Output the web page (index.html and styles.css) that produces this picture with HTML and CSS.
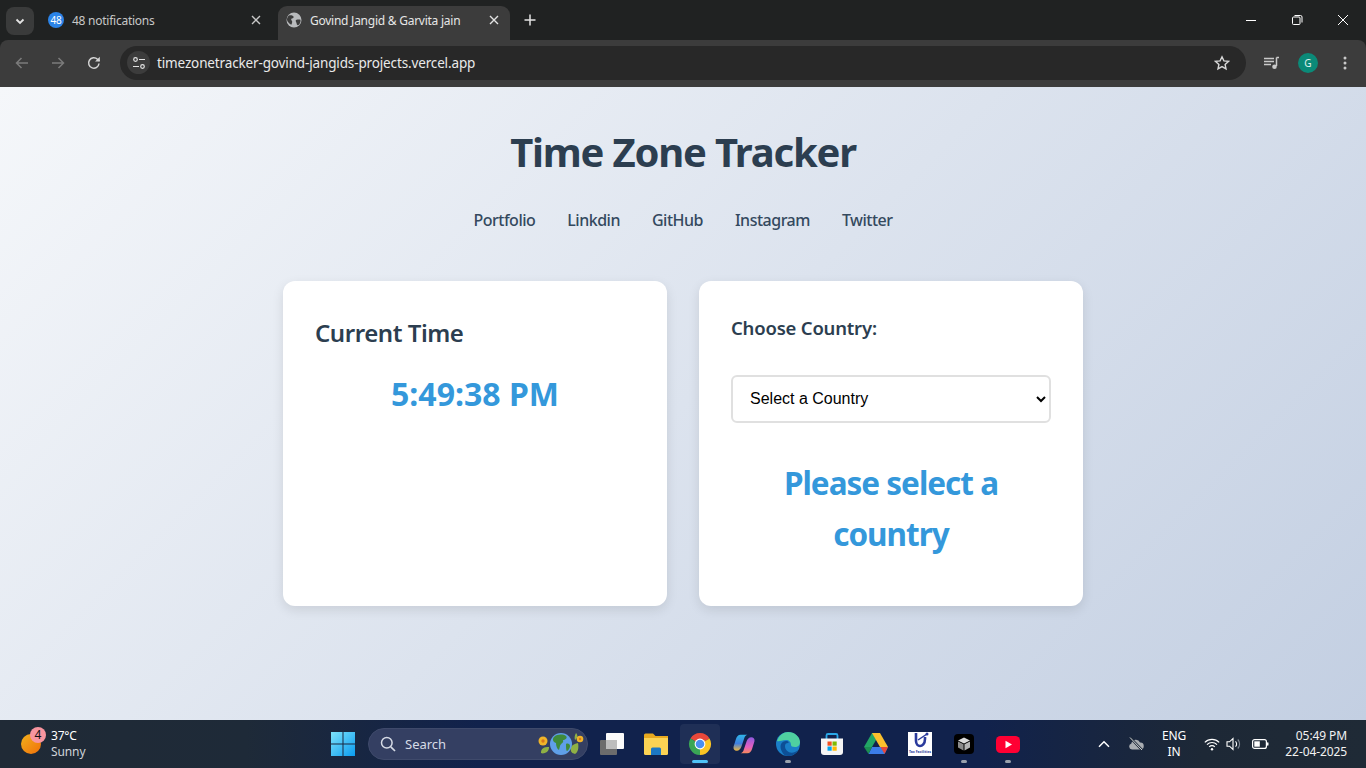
FILE: index.html
```html
<!DOCTYPE html>
<html lang="en">
<head>
    <meta charset="UTF-8">
    <meta name="viewport" content="width=device-width, initial-scale=1.0">
    <title>Time Zone Tracker</title>
    <link rel="stylesheet" href="styles.css">
</head>
<body>
    <!-- browser chrome -->
    <div class="tabstrip">
        <div class="tab-search">
            <svg width="12" height="12" viewBox="0 0 12 12"><path d="M2.5 4.5 6 8l3.5-3.5" fill="none" stroke="#e3e3e3" stroke-width="1.8"/></svg>
        </div>
        <div class="tab">
            <span class="badge-fav">48</span>
            <span class="tab-title">48 notifications</span>
            <svg class="tab-x" width="10" height="10" viewBox="0 0 10 10"><path d="M1 1l8 8M9 1l-8 8" stroke="#c7c7c7" stroke-width="1.4"/></svg>
        </div>
        <div class="tab tab-active">
            <svg width="16" height="16" viewBox="0 0 16 16"><circle cx="8" cy="8" r="7.5" fill="#b9bbbd"/><path d="M3 3.5c2-.6 3.5 0 4.500 1 .8.8-.6 1.800-1.500 2-1.200.3-1 1.500-.2 2.200.9.8.2 2.800-.5 4C3.500 12 1.500 10 1 8c-.2-1.800.8-3.500 2-4.500zM10 8c1.200-.5 3.500-.6 4.500-.3.300 2-.5 4-2 5.300-1 .6-1.800-.4-1.800-1.300C10.700 10.500 9 9 10 8z" fill="#3c3c3c"/></svg>
            <span class="tab-title">Govind Jangid &amp; Garvita jain</span>
            <svg class="tab-x" width="10" height="10" viewBox="0 0 10 10"><path d="M1 1l8 8M9 1l-8 8" stroke="#e3e3e3" stroke-width="1.4"/></svg>
        </div>
        <svg class="new-tab" width="12" height="12" viewBox="0 0 12 12"><path d="M6 .5v11M.5 6h11" stroke="#e3e3e3" stroke-width="1.5"/></svg>
        <div class="win-btns">
            <svg width="12" height="12" viewBox="0 0 12 12"><path d="M1 6.500h10" stroke="#fff" stroke-width="1"/></svg>
            <svg width="12" height="12" viewBox="0 0 12 12"><rect x="1.500" y="3" width="7.500" height="7.500" rx="1" fill="none" stroke="#fff"/><path d="M3.500 1.500H9.500a1.500 1.500 0 0 1 1.500 1.500V8.500" fill="none" stroke="#fff"/></svg>
            <svg width="12" height="12" viewBox="0 0 12 12"><path d="M1 1l10 10M11 1L1 11" stroke="#fff" stroke-width="1"/></svg>
        </div>
    </div>
    <div class="toolbar">
        <svg class="nav-icon" width="16" height="16" viewBox="0 0 16 16"><path d="M14 8H2.500M7.500 3 2.500 8l5 5" fill="none" stroke="#7b7b7b" stroke-width="1.500"/></svg>
        <svg class="nav-icon" width="16" height="16" viewBox="0 0 16 16"><path d="M2 8h11.500M8.500 3l5 5-5 5" fill="none" stroke="#7b7b7b" stroke-width="1.500"/></svg>
        <svg class="nav-icon" width="16" height="16" viewBox="0 0 16 16"><path d="M13 8.500A5.200 5.200 0 1 1 11.500 4.300L13.500 6" fill="none" stroke="#d4d4d4" stroke-width="1.500"/><path d="M13.800 1.800v4.700H9.100z" fill="#d4d4d4"/></svg>
        <div class="omnibox">
            <span class="site-info">
                <svg width="14" height="14" viewBox="0 0 14 14"><g fill="none" stroke="#e3e3e3" stroke-width="1.200"><circle cx="3.500" cy="3.500" r="1.800"/><path d="M7 3.500h6M1 10.500h6"/><circle cx="10.500" cy="10.500" r="1.800"/></g></svg>
            </span>
            <span class="url">timezonetracker-govind-jangids-projects.vercel.app</span>
            <svg class="star" width="16" height="16" viewBox="0 0 16 16"><path d="M8 1.800l1.900 4.100 4.500.5-3.300 3 .9 4.400L8 11.600l-4 2.200.9-4.400-3.300-3 4.500-.5z" fill="none" stroke="#d8d8d8" stroke-width="1.400"/></svg>
        </div>
        <svg class="media" width="16" height="14" viewBox="0 0 16 14"><path d="M0 2.500h10M0 5.500h10M0 8.500h7" stroke="#c9c9c9" stroke-width="1.300"/><path d="M12.500 1.500H15M12.500 1.500V10" stroke="#c9c9c9" stroke-width="1.500" fill="none"/><circle cx="10.500" cy="10.800" r="2.300" fill="#c9c9c9"/></svg>
        <span class="avatar">G</span>
        <svg class="dots" width="4" height="14" viewBox="0 0 4 14"><circle cx="2" cy="2" r="1.500" fill="#c9c9c9"/><circle cx="2" cy="7" r="1.500" fill="#c9c9c9"/><circle cx="2" cy="12" r="1.500" fill="#c9c9c9"/></svg>
    </div>

    <!-- the page itself -->
    <main class="page">
        <h1 class="title">Time Zone Tracker</h1>
        <nav class="links">
            <a href="#">Portfolio</a>
            <a href="#">Linkdin</a>
            <a href="#">GitHub</a>
            <a href="#">Instagram</a>
            <a href="#">Twitter</a>
        </nav>
        <div class="cards">
            <section class="card">
                <h2 class="card-title">Current Time</h2>
                <div class="clock">5:49:38 PM</div>
            </section>
            <section class="card">
                <label class="country-label" for="country">Choose Country:</label>
                <select id="country" class="country-select">
                    <option>Select a Country</option>
                </select>
                <div class="country-time">Please select a country</div>
            </section>
        </div>
    </main>

    <!-- windows taskbar -->
    <footer class="taskbar">
        <div class="weather">
            <span class="sun"><span class="sun-badge">4</span></span>
            <span class="weather-text"><b>37°C</b><i>Sunny</i></span>
        </div>
        <div class="apps">
            <span class="slot">
                <svg width="24" height="24" viewBox="0 0 24 24"><defs><linearGradient id="win" x1="0" y1="0" x2="1" y2="1"><stop offset="0" stop-color="#7ee3fb"/><stop offset="1" stop-color="#0a9bf0"/></linearGradient></defs><path fill="url(#win)" d="M0 0h11.500v11.500H0zM12.500 0H24v11.500H12.500zM0 12.500h11.500V24H0zM12.500 12.500H24V24H12.500z"/></svg>
            </span>
            <div class="search">
                <svg width="16" height="16" viewBox="0 0 16 16"><circle cx="6.800" cy="6.800" r="5.300" fill="none" stroke="#d6dbe6" stroke-width="1.500"/><path d="M10.800 10.800 15 15" stroke="#d6dbe6" stroke-width="1.700"/></svg>
                <span class="search-text">Search</span>
                <svg class="search-art" width="46" height="24" viewBox="0 0 46 24"><path d="M3 21c0-5 3-6 8-6 0 1 0 3-2 5-2 1-4 2-6 1zM37 22c-3-1-5-2-4-7 1-2 3-3 7-4 1 5 0 9-3 11zM37 8c-1-3 0-5 1-7 2 2 2 5-1 7z" fill="#8fb045"/><circle cx="23" cy="12" r="11" fill="#5f9fe8"/><path d="M16 5c3-3 9-3 12-1 2 2-1 4-3 4 1 3-2 3-3 6l-1 4c-2-1-3-4-3-7-3-1-4-4-2-6zM28 12c2-1 4 0 4 2s-2 5-3 5-1-5-1-7z" fill="#3f8a3a"/><circle cx="5" cy="9" r="4.500" fill="#f0b429"/><circle cx="5" cy="9" r="1.700" fill="#d9771a"/><circle cx="42" cy="7" r="3.300" fill="#f0b429"/><circle cx="42" cy="7" r="1.200" fill="#d9771a"/></svg>
            </div>
            <span class="slot">
                <svg width="24" height="22" viewBox="0 0 24 22"><rect x="0" y="7" width="17" height="15" rx="1" fill="#6c6c6c"/><rect x="6" y="0" width="18" height="16" rx="1" fill="#fbfbfb"/><rect x="6" y="7" width="11" height="9" fill="#bdbdbd"/></svg>
            </span>
            <span class="slot">
                <svg width="24" height="22" viewBox="0 0 24 22"><path d="M0 2a1.500 1.500 0 0 1 1.500-1.500H9L11.500 3H24v3H0z" fill="#e8a91f"/><path d="M0 5h24v15.500a1.500 1.500 0 0 1-1.500 1.500h-21A1.500 1.500 0 0 1 0 20.500z" fill="#fbd354"/><path d="M7 16a1.500 1.500 0 0 1 1.500-1.500h7A1.500 1.500 0 0 1 17 16v6H7z" fill="#1c78c4"/></svg>
            </span>
            <span class="slot slot-active">
                <svg width="24" height="24" viewBox="0 0 24 24"><path d="M12 12 2.470 6.500A11 11 0 0 1 21.530 6.500z" fill="#e8483a"/><path d="M12 12 21.530 6.500A11 11 0 0 1 12 23z" fill="#fbc524"/><path d="M12 12 12 23A11 11 0 0 1 2.470 6.500z" fill="#3aa655"/><circle cx="12" cy="12" r="5.400" fill="#fff"/><circle cx="12" cy="12" r="4.300" fill="#4a8ff0"/></svg>
                <span class="run-bar run-bar-on"></span>
            </span>
            <span class="slot">
                <svg width="22" height="24" viewBox="0 0 26 24"><defs><linearGradient id="cpl" x1="0" y1="0" x2="0" y2="1"><stop offset="0" stop-color="#2fb6e8"/><stop offset=".55" stop-color="#3f7fe0"/><stop offset="1" stop-color="#f5b93c"/></linearGradient><linearGradient id="cpr" x1="0" y1="0" x2="0" y2="1"><stop offset="0" stop-color="#8f5ae0"/><stop offset=".6" stop-color="#e45fc0"/><stop offset="1" stop-color="#f58a5a"/></linearGradient></defs><path d="M9 1h8c-2 .5-3 2-3.500 3.500L10 15c-1 3-3 5-5.500 5C1.500 20 0 17.800 .7 15L3.500 6C4.500 3 6 1 9 1z" fill="url(#cpl)"/><path d="M17 23H9c2-.5 3-2 3.500-3.500L16 9c1-3 3-5 5.500-5 3 0 4.500 2.200 3.800 5L22.500 18c-1 3-2.500 5-5.500 5z" fill="url(#cpr)"/></svg>
            </span>
            <span class="slot">
                <svg width="24" height="24" viewBox="0 0 24 24"><circle cx="12" cy="12" r="12" fill="#1a7fc8"/><path d="M1 9C3 3 8 0 12 0c7 0 12 5 12 10 0 3-2 5-5 5-3 0-4-1-4-2 0-3-2-5-5-5-4 0-7 2-9 1z" fill="#4fd0a0"/><path d="M9 14c0 5 5 8 10 6 1-.5 2-1 3-2-2 4-6 6-10 6-1 0-2-.2-3-.5C6 21 3.500 16 5 12c1-2 3-3 5-3 3 0 3 2 2 2-2 0-3 1-3 3z" fill="#0d4f96"/></svg>
                <span class="run-bar"></span>
            </span>
            <span class="slot">
                <svg width="24" height="24" viewBox="0 0 24 24"><path d="M6.500 7V3.500A1.500 1.500 0 0 1 8 2h8a1.500 1.500 0 0 1 1.500 1.500V7" fill="none" stroke="#2aa8e8" stroke-width="1.800"/><path d="M1 6.500h22V20a3 3 0 0 1-3 3H4a3 3 0 0 1-3-3z" fill="#f5f5f5"/><path d="M7.500 9.500h4.200v4.200H7.500z" fill="#f25022"/><path d="M12.500 9.500h4.200v4.200h-4.200z" fill="#7fba00"/><path d="M7.500 14.500h4.200v4.200H7.500z" fill="#00a4ef"/><path d="M12.500 14.500h4.200v4.200h-4.200z" fill="#ffb900"/></svg>
            </span>
            <span class="slot">
                <svg width="24" height="22" viewBox="0 0 24 22"><path d="M8 0h8L8 14H0z" fill="#22a565"/><path d="M16 0l8 14h-8L8 0z" fill="#fbc02d"/><path d="M4.500 21 8 14h16l-3.500 7z" fill="#3b7de8"/><path d="M0 14h8l-3.500 7z" fill="#1b8f52"/><path d="M24 14l-3.500 7-4-7z" fill="#e5483a"/></svg>
            </span>
            <span class="slot">
                <span class="tfl">
                    <svg width="20" height="17" viewBox="0 0 20 17"><path d="M6 1v8c0 3 2 5 4 5s5-2 5-7V5" fill="none" stroke="#2a3a9c" stroke-width="2.600"/><path d="M8 8l9-6" stroke="#2a3a9c" stroke-width="1.500"/><circle cx="17" cy="2" r="1.500" fill="#2a3a9c"/></svg>
                    <span class="tfl-text">Tax Facilities</span>
                </span>
            </span>
            <span class="slot">
                <svg width="20" height="20" viewBox="0 0 20 20"><rect width="20" height="20" rx="4" fill="#000"/><path d="M10 3.500 16 6.500 10 9.500 4 6.500z" fill="#dcdcdc"/><path d="M4 7.500l5.500 2.700V16.500L4 13.500z" fill="#8c8c8c"/><path d="M16 7.500l-5.500 2.700V16.500L16 13.500z" fill="#b5b5b5"/></svg>
                <span class="run-bar"></span>
            </span>
            <span class="slot">
                <svg width="24" height="17" viewBox="0 0 24 17"><rect width="24" height="17" rx="4.500" fill="#ff0033"/><path d="M9.500 4.800v7.400l6.500-3.700z" fill="#fff"/></svg>
                <span class="run-bar"></span>
            </span>
        </div>
        <div class="tray">
            <svg class="tray-caret" width="12" height="8" viewBox="0 0 12 8"><path d="M1 6.800 6 1.800l5 5" fill="none" stroke="#fff" stroke-width="1.500"/></svg>
            <svg class="tray-cloud" width="16" height="14" viewBox="0 0 16 14"><path d="M4 12.500a3 3 0 0 1-.6-5.900A4.500 4.500 0 0 1 12 5.500a3.500 3.500 0 0 1 .5 7z" fill="#a9adb2"/><path d="M2.500 1 14 13" stroke="#1f2a38" stroke-width="2.500"/><path d="M2 .5 14 13" stroke="#d0d3d6" stroke-width="1"/></svg>
            <span class="lang">ENG<br>IN</span>
            <svg class="tray-wifi" width="16" height="13" viewBox="0 0 16 13"><g fill="none" stroke="#fff" stroke-width="1.200"><path d="M.8 4.300a10.200 10.200 0 0 1 14.400 0"/><path d="M3 6.600a7 7 0 0 1 10 0"/><path d="M5.200 8.900a3.900 3.900 0 0 1 5.600 0"/></g><circle cx="8" cy="11.300" r="1.200" fill="#fff"/></svg>
            <svg class="tray-vol" width="16" height="14" viewBox="0 0 16 14"><path d="M1 4.800h2.500L7 1.500v11L3.500 9.200H1z" fill="none" stroke="#fff" stroke-width="1.100"/><path d="M9.500 4.300a3.800 3.800 0 0 1 0 5.400" fill="none" stroke="#fff" stroke-width="1.100"/><path d="M11.800 2.500a6.500 6.500 0 0 1 0 9" fill="none" stroke="#7d8591" stroke-width="1.100"/></svg>
            <svg class="tray-batt" width="17" height="10" viewBox="0 0 17 10"><rect x=".6" y=".6" width="13.800" height="8.800" rx="2" fill="none" stroke="#fff" stroke-width="1.200"/><rect x="2.300" y="2.300" width="5.500" height="5.400" fill="#fff"/><rect x="15" y="3.300" width="1.500" height="3.400" rx=".7" fill="#fff"/></svg>
            <span class="datetime">05:49 PM<br>22-04-2025</span>
        </div>
    </footer>
</body>
</html>
```

FILE: styles.css
```css
* { box-sizing: border-box; }
html, body { margin: 0; height: 100%; }
body { width: 1366px; height: 768px; overflow: hidden; display: flex; flex-direction: column; font-family: "Noto Sans", "Open Sans", sans-serif; background: #202222; }

/* tab strip */
.tabstrip { height: 40px; flex: none; background: #202222; display: flex; align-items: flex-start; padding: 6px 0 0 6px; color: #c7c7c7; font-size: 12px; }
.tab-search { width: 28px; height: 28px; margin-top: 1px; border-radius: 8px; background: #3a3b3b; display: flex; align-items: center; justify-content: center; }
.tab { width: 232px; height: 34px; margin-left: 6px; padding: 0 11px 6px 8px; display: flex; align-items: center; gap: 8px; }
.tab-title { flex: 1; white-space: nowrap; letter-spacing: -0.25px; }
.tab-x { flex: none; }
.tab-active { margin-left: 6px; width: 232px; padding-bottom: 6px; background: #3c3c3c; color: #e6e6e6; border-radius: 9px 9px 0 0; }
.tab:first-of-type { width: 238px; }
.badge-fav { width: 16px; height: 16px; border-radius: 50%; background: #2b84e8; color: #fff; font-size: 10px; line-height: 16px; text-align: center; letter-spacing: -0.3px; }
.new-tab { margin: 8px 0 0 14px; }
.win-btns { margin-left: auto; display: flex; gap: 34px; margin-right: 17px; }
.win-btns svg { width: 12px; height: 12px; margin-top: 8px; }

/* toolbar */
.toolbar { height: 47px; flex: none; background: #3c3c3c; display: flex; align-items: center; padding: 0 0 2px 14px; border-radius: 8px 8px 0 0; }
.nav-icon { margin-right: 20px; }
.nav-icon:nth-child(3) { margin-right: 18px; }
.omnibox { width: 1126px; height: 34px; border-radius: 17px; background: #282828; display: flex; align-items: center; padding: 0 16px 0 7px; }
.site-info { width: 23px; height: 23px; border-radius: 50%; background: #3c3c3c; display: flex; align-items: center; justify-content: center; }
.url { margin-left: 7px; color: #eaeaea; font-size: 13.500px; letter-spacing: -0.14px; flex: 1; }
.media { margin-left: 18px; }
.avatar { width: 20px; height: 20px; margin-left: 18px; border-radius: 50%; background: #0b8a78; color: #e0f2ee; font-size: 10px; line-height: 20px; text-align: center; }
.dots { margin-left: 25px; }

/* page content */
.page { height: 633px; flex: none; background: linear-gradient(135deg, #f5f7fa 0%, #c3cfe2 100%); display: flex; flex-direction: column; align-items: center; }
.title { margin: 39px 0 0; font-size: 40px; line-height: 52px; font-weight: 700; color: #2c3e50; letter-spacing: -1.200px; }
.links { display: flex; gap: 32px; margin-top: 32px; height: 20px; align-items: center; }
.links a { color: #34495e; font-size: 16px; font-weight: 500; text-decoration: none; letter-spacing: -0.5px; }
.cards { display: flex; gap: 32px; margin-top: 51px; }
.card { width: 384px; height: 325px; padding: 32px; background: #fff; border-radius: 12px; box-shadow: 0 4px 12px rgba(0, 0, 0, 0.1); }
.card-title { margin: 7px 0 0; font-size: 24px; line-height: 26px; font-weight: 600; color: #2c3e50; letter-spacing: -0.45px; }
.clock { margin-top: 28px; font-size: 32px; line-height: 40px; font-weight: 700; color: #3498db; text-align: center; }
.country-label { display: block; margin-top: -1px; font-size: 18.500px; line-height: 32px; font-weight: 600; color: #2c3e50; letter-spacing: -0.2px; }
.country-select { display: block; width: 100%; height: 48px; margin-top: 31px; padding: 0 13px 2px; border: 2px solid #e0e0e0; border-radius: 6px; background: #fff; color: #000; font-family: "Liberation Sans", Arial, sans-serif; font-size: 16px; }
.country-time { margin-top: 34px; font-size: 31.500px; line-height: 51px; font-weight: 700; color: #3498db; text-align: center; letter-spacing: -1px; }

/* taskbar */
.taskbar { height: 48px; flex: none; background: linear-gradient(90deg, #202a36 0%, #1e2a38 18%, #11224c 35%, #11224c 72%, #1d2836 88%, #1f2a36 100%); display: flex; align-items: center; color: #fff; font-size: 12px; }
.weather { width: 321px; flex: none; display: flex; align-items: center; padding-left: 21px; gap: 10px; }
.sun { width: 20px; height: 20px; flex: none; border-radius: 50%; background: linear-gradient(135deg, #f3b21c, #f06f0a); position: relative; }
.sun-badge { position: absolute; left: 9px; top: -7px; width: 16px; height: 16px; border-radius: 50%; background: #f8959f; color: #111; font-size: 12px; line-height: 16px; text-align: center; }
.weather-text { display: flex; flex-direction: column; line-height: 16px; }
.weather-text b { font-weight: 400; letter-spacing: -0.2px; }
.weather-text i { font-style: normal; color: #d0d4d9; letter-spacing: -0.1px; }
.apps { display: flex; align-items: center; height: 48px; }
.slot { width: 44px; height: 40px; flex: none; display: flex; align-items: center; justify-content: center; position: relative; border-radius: 4px; }
.slot-active { width: 40px; margin: 0 2px; background: rgba(255, 255, 255, 0.06); }
.run-bar { position: absolute; left: 19px; bottom: 1px; width: 6px; height: 3px; border-radius: 2px; background: #9aa2ad; }
.run-bar-on { left: 12px; width: 16px; background: #4fc3f7; }
.search { width: 220px; height: 32px; margin: 0 2px 0 3px; flex: none; border-radius: 16px; background: #343f62; border: 1px solid #3f4a6b; display: flex; align-items: center; padding: 0 3px 0 11px; font-size: 13px; }
.search-text { margin-left: 9px; color: #d6dbe6; flex: 1; }
.tfl { width: 24px; height: 24px; background: #fff; display: flex; flex-direction: column; align-items: center; overflow: hidden; }
.tfl-text { font-size: 3.500px; line-height: 5px; color: #2a3a9c; font-weight: 700; white-space: nowrap; }
.tray { flex: 1; display: flex; align-items: center; }
.tray-caret { margin-left: 68px; }
.tray-cloud { margin-left: 18px; }
.lang { width: 44px; margin-left: 8px; text-align: center; font-size: 12px; line-height: 16px; letter-spacing: -0.1px; }
.tray-wifi { margin-left: 8px; }
.tray-vol { margin-left: 6px; }
.tray-batt { margin-left: 10px; }
.datetime { margin-left: auto; margin-right: 19px; text-align: right; font-size: 12px; line-height: 16px; letter-spacing: -0.1px; color: #f2f2f2; }
```
